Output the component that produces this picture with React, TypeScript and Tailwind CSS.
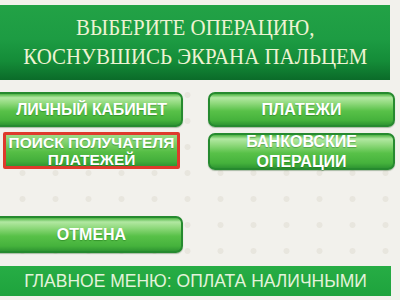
const btn =
  "flex items-center justify-center rounded-[7px] border-2 border-[#268a2f] bg-[linear-gradient(to_bottom,#4fb444_0%,#b2e8a2_12%,#8fd97c_30%,#58c148_55%,#45b23c_85%,#2f9632_100%)] text-white font-bold text-[16px] leading-[20px] text-center [text-shadow:0_1px_1px_rgba(0,80,0,0.35)] shadow-[0_1px_1px_rgba(0,60,0,0.3)]";

export default function App() {
  return (
    <div
      className="relative h-[300px] w-[400px] overflow-hidden bg-[#f2f1ec] bg-[radial-gradient(circle,#e8e6de_2.5px,transparent_3.5px)] bg-[length:33px_26px] bg-[position:6px_4px]"
      style={{ fontFamily: '"Liberation Sans", Arial, sans-serif' }}
    >
      <header className="mt-[5px] flex h-[75px] w-[390px] flex-col items-center justify-center bg-[linear-gradient(to_bottom,#22a246_0%,#1d9c43_45%,#148c38_75%,#0b6b29_100%)] pb-[1px]">
        <div
          className="origin-center scale-x-[0.89] text-center text-[23.5px] leading-[29px] text-[#eef3d2] whitespace-nowrap"
          style={{ fontFamily: '"Liberation Serif", "Times New Roman", serif' }}
        >
          <div>ВЫБЕРИТЕ ОПЕРАЦИЮ,</div>
          <div>КОСНУВШИСЬ ЭКРАНА ПАЛЬЦЕМ</div>
        </div>
      </header>

      <div className="mt-[12px] grid grid-cols-[191px_187px] gap-x-[25px] -ml-[8px]">
        <div className={`${btn} h-[35px] pl-[8px] tracking-[-0.2px]`}>ЛИЧНЫЙ КАБИНЕТ</div>
        <div className={`${btn} h-[35px]`}>ПЛАТЕЖИ</div>

        <div className="ml-[11px] mt-[5px] h-[37px] w-[177px] overflow-hidden rounded-[2px] border-[3px] border-[#de3a2c] bg-[linear-gradient(to_bottom,#9ddc88_0%,#7fd16c_25%,#55be45_55%,#43ae3b_85%,#2f9632_100%)]">
          <div className="-mt-[1px] text-center text-[15.5px] font-bold leading-[17px] text-white [text-shadow:0_1px_1px_rgba(0,80,0,0.35)]">
            ПОИСК ПОЛУЧАТЕЛЯ
            <br />
            ПЛАТЕЖЕЙ
          </div>
        </div>
        <div className={`${btn} mt-[6px] h-[37px] pt-[1px]`}>
          БАНКОВСКИЕ
          <br />
          ОПЕРАЦИИ
        </div>
      </div>

      <div className="mt-[46px] -ml-[8px] w-[191px]">
        <div className={`${btn} h-[37px] pl-[8px]`}>ОТМЕНА</div>
      </div>

      <footer className="mt-[13px] flex h-[30px] w-[391px] items-center justify-center bg-[linear-gradient(to_bottom,#27ad45,#1ea33d)] text-[17.5px] text-[#e3f3da] whitespace-nowrap">
        ГЛАВНОЕ МЕНЮ: ОПЛАТА НАЛИЧНЫМИ
      </footer>
    </div>
  );
}
